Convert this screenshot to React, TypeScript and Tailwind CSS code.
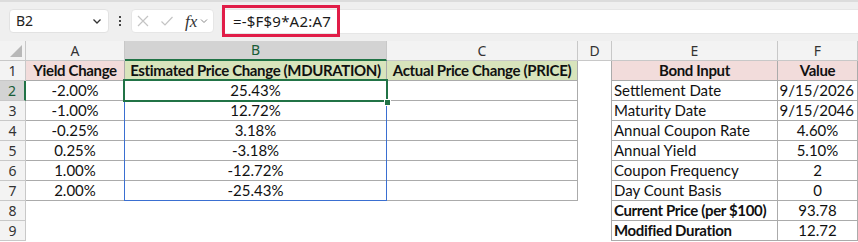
import React from "react";

type Row = {
  n: number;
  a?: string;
  b?: string;
  c?: string;
  e?: string;
  f?: string;
  fAlign?: "right" | "center";
  eBold?: boolean;
};

const rows: Row[] = [
  { n: 1, a: "Yield Change", b: "Estimated Price Change (MDURATION)", c: "Actual Price Change (PRICE)", e: "Bond Input", f: "Value" },
  { n: 2, a: "-2.00%", b: "25.43%", e: "Settlement Date", f: "9/15/2026", fAlign: "right" },
  { n: 3, a: "-1.00%", b: "12.72%", e: "Maturity Date", f: "9/15/2046", fAlign: "right" },
  { n: 4, a: "-0.25%", b: "3.18%", e: "Annual Coupon Rate", f: "4.60%" },
  { n: 5, a: "0.25%", b: "-3.18%", e: "Annual Yield", f: "5.10%" },
  { n: 6, a: "1.00%", b: "-12.72%", e: "Coupon Frequency", f: "2" },
  { n: 7, a: "2.00%", b: "-25.43%", e: "Day Count Basis", f: "0" },
  { n: 8, e: "Current Price (per $100)", f: "93.78", eBold: true },
  { n: 9, e: "Modified Duration", f: "12.72", eBold: true },
];

const cellFont = "font-['Lato',sans-serif] text-[15px] text-[#111] whitespace-nowrap overflow-hidden";
const boldCls = " font-bold text-[13.5px] tracking-[-0.35px]";

export default function App() {
  return (
    <div className="w-[858px] h-[242px] overflow-hidden bg-white relative">
      {/* Formula bar */}
      <div className="h-[41px] bg-[#efefef] relative font-['Noto_Sans',sans-serif]">
        <div className="h-[2px] bg-[#dcdcdc]" />
        <div className="flex items-start pt-[7px]">
          <div className="ml-[9px] w-[100px] h-[24px] bg-white rounded-[4px] border border-[#e2e2e2] flex items-center justify-between pl-[6px] pr-[5px]">
            <span className="text-[14px] text-[#222] leading-none">B2</span>
            <svg width="12" height="12" viewBox="0 0 12 12" fill="none">
              <path d="M2.5 4.5 L6 8 L9.5 4.5" stroke="#333" strokeWidth="1.3" />
            </svg>
          </div>
          <div className="w-[22px] h-[24px] flex flex-col items-center justify-center gap-[2px]">
            <div className="w-[2px] h-[2px] bg-[#444]" />
            <div className="w-[2px] h-[2px] bg-[#444]" />
            <div className="w-[2px] h-[2px] bg-[#444]" />
          </div>
          <div className="w-[83px] h-[24px] bg-white rounded-[4px] border border-[#e6e6e6] flex items-center pl-[4px]">
            <svg width="14" height="14" viewBox="0 0 14 14" fill="none">
              <path d="M2 2 L12 12 M12 2 L2 12" stroke="#c4c4c4" strokeWidth="1.2" />
            </svg>
            <svg className="ml-[10px]" width="14" height="14" viewBox="0 0 14 14" fill="none">
              <path d="M1.5 7.5 L5 11 L12.5 3" stroke="#c4c4c4" strokeWidth="1.2" />
            </svg>
            <span className="ml-[11px] font-['Liberation_Serif',serif] italic text-[17px] text-[#333] leading-none">fx</span>
            <svg className="ml-[2px]" width="10" height="10" viewBox="0 0 10 10" fill="none">
              <path d="M2 3.5 L5 6.5 L8 3.5" stroke="#888" strokeWidth="1" />
            </svg>
          </div>
          <div className="ml-[7px] flex-1 h-[25px] bg-white rounded-l-[4px] border-y border-l border-[#e6e6e6] relative flex items-center">
            <span className="ml-[11px] text-[15px] text-[#1a1a1a] leading-none tracking-[0.2px]">=-$F$9*A2:A7</span>
            <div className="absolute left-[0px] top-[-5px] w-[118px] h-[32px] border-[3px] border-[#e11d48]" />
          </div>
        </div>
      </div>

      {/* Column headers */}
      <div className="grid grid-cols-[26px_99px_262px_191px_34px_166px_80px] h-[20px] font-['Noto_Sans',sans-serif] text-[14px] text-[#333]">
        <div className="bg-[#f3f3f3] border-r border-b border-[#c8c8c8] relative">
          <svg className="absolute right-[3px] bottom-[3px]" width="12" height="12" viewBox="0 0 12 12">
            <path d="M12 0 L12 12 L0 12 Z" fill="#b8b8b8" />
          </svg>
        </div>
        <div className="bg-[#f3f3f3] border-r border-b border-[#c8c8c8] flex items-center justify-center leading-none">A</div>
        <div className="bg-[#d3d3d3] border-r border-[#c8c8c8] border-b-2 border-b-[#217346] flex items-center justify-center leading-none text-[#185c37]">B</div>
        <div className="bg-[#f3f3f3] border-r border-b border-[#c8c8c8] flex items-center justify-center leading-none">C</div>
        <div className="bg-[#f3f3f3] border-r border-b border-[#c8c8c8] flex items-center justify-center leading-none">D</div>
        <div className="bg-[#f3f3f3] border-r border-b border-[#c8c8c8] flex items-center justify-center leading-none">E</div>
        <div className="bg-[#f3f3f3] border-r border-b border-[#c8c8c8] flex items-center justify-center leading-none">F</div>
      </div>

      {/* Rows */}
      <div className="relative">
        {rows.map((r) => {
          const hdr = r.n === 1;
          const inAC = r.n <= 7;
          return (
            <div key={r.n} className="grid grid-cols-[26px_99px_262px_191px_34px_166px_80px] h-[20px]">
              <div
                className={
                  "flex items-center justify-center leading-none font-['Noto_Sans',sans-serif] text-[14px] border-b border-[#c8c8c8] " +
                  (r.n === 2
                    ? "bg-[#d3d3d3] text-[#185c37] border-r-2 border-r-[#217346]"
                    : "bg-[#f3f3f3] text-[#333] border-r border-r-[#c8c8c8]")
                }
              >
                {r.n}
              </div>
              <div
                className={
                  cellFont +
                  " flex items-center justify-center leading-none " +
                  (inAC ? "border-r border-b border-[#ababab] " : "") +
                  (hdr ? "bg-[#f2dcdb]" + boldCls : "")
                }
              >
                {r.a}
              </div>
              <div
                className={
                  cellFont +
                  " flex items-center justify-center leading-none " +
                  (inAC ? "border-r border-b border-[#ababab] " : "") +
                  (hdr ? "bg-[#d8e4bc]" + boldCls : "")
                }
              >
                {r.b}
              </div>
              <div
                className={
                  cellFont +
                  " flex items-center justify-center leading-none " +
                  (inAC ? "border-r border-b border-[#ababab] " : "") +
                  (hdr ? "bg-[#d8e4bc]" + boldCls : "")
                }
              >
                {r.c}
              </div>
              <div className="border-r border-[#ababab]" />
              <div
                className={
                  cellFont +
                  " flex items-center leading-none border-r border-b border-[#ababab] " +
                  (hdr ? "justify-center bg-[#f2dcdb]" + boldCls : "pl-[2px]") +
                  (r.eBold ? boldCls : "")
                }
              >
                {r.e}
              </div>
              <div
                className={
                  cellFont +
                  " flex items-center leading-none border-r border-b border-[#ababab] " +
                  (hdr ? "justify-center bg-[#f2dcdb]" + boldCls : r.fAlign === "right" ? "justify-end pr-[3px]" : "justify-center")
                }
              >
                {r.f}
              </div>
            </div>
          );
        })}

        {/* Blue reference range B2:B7 */}
        <div className="absolute left-[124px] top-[19px] w-[263px] h-[121px] border border-[#3a6fd1] pointer-events-none" />
        {/* Active cell B2 */}
        <div className="absolute left-[123px] top-[18px] w-[265px] h-[23px] border-2 border-[#217346] pointer-events-none" />
        <div className="absolute left-[384px] top-[38px] w-[5px] h-[5px] bg-[#217346] border border-white box-content pointer-events-none" />
      </div>
    </div>
  );
}
